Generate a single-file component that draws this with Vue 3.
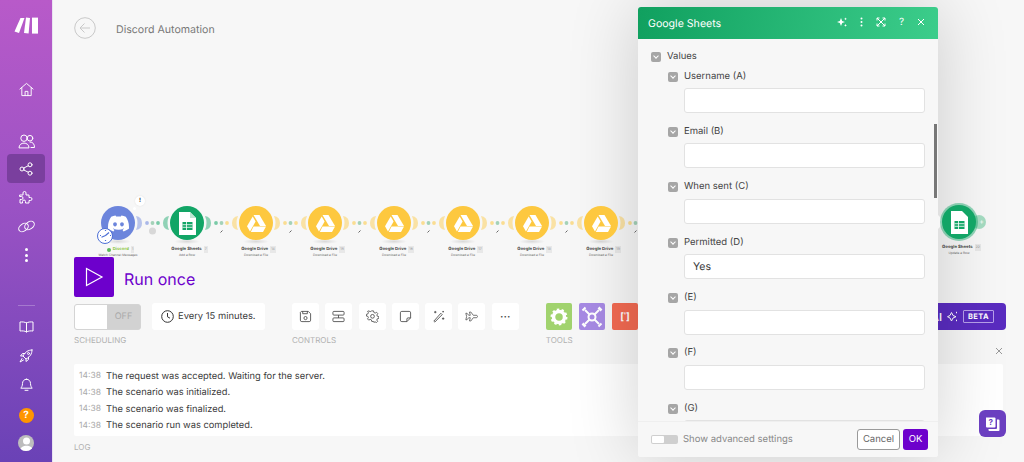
<script setup>
const discordPath = 'M20.317 4.3698a19.7913 19.7913 0 00-4.8851-1.5152.0741.0741 0 00-.0785.0371c-.211.3753-.4447.8648-.6083 1.2495-1.8447-.2762-3.68-.2762-5.4868 0-.1636-.3933-.4058-.8742-.6177-1.2495a.077.077 0 00-.0785-.037 19.7363 19.7363 0 00-4.8852 1.515.0699.0699 0 00-.0321.0277C.5334 9.0458-.319 13.5799.0992 18.0578a.0824.0824 0 00.0312.0561c2.0528 1.5076 4.0413 2.4228 5.9929 3.0294a.0777.0777 0 00.0842-.0276c.4616-.6304.8731-1.2952 1.226-1.9942a.076.076 0 00-.0416-.1057c-.6528-.2476-1.2743-.5495-1.8722-.8923a.077.077 0 01-.0076-.1277c.1258-.0943.2517-.1923.3718-.2914a.0743.0743 0 01.0776-.0105c3.9278 1.7933 8.18 1.7933 12.0614 0a.0739.0739 0 01.0785.0095c.1202.099.246.1981.3728.2924a.077.077 0 01-.0066.1276 12.2986 12.2986 0 01-1.873.8914.0766.0766 0 00-.0407.1067c.3604.698.7719 1.3628 1.225 1.9932a.076.076 0 00.0842.0286c1.961-.6067 3.9495-1.5219 6.0023-3.0294a.077.077 0 00.0313-.0552c.5004-5.177-.8382-9.6739-3.5485-13.6604a.061.061 0 00-.0312-.0286zM8.02 15.3312c-1.1825 0-2.1569-1.0857-2.1569-2.419 0-1.3332.9555-2.4189 2.157-2.4189 1.2108 0 2.1757 1.0952 2.1568 2.419 0 1.3332-.9555 2.4189-2.1569 2.4189zm7.9748 0c-1.1825 0-2.1569-1.0857-2.1569-2.419 0-1.3332.9554-2.4189 2.1569-2.4189 1.2108 0 2.1757 1.0952 2.1568 2.419 0 1.3332-.946 2.4189-2.1568 2.4189Z'

const blue = '#6c85dc'
const green = '#12a566'
const yellow = '#fdc83f'

const drive = { type: 'drive', color: yellow, title: 'Google Drive', sub: 'Download a File' }
const nodes = [
  { type: 'discord', color: blue, next: green, title: 'Discord', sub: 'Watch Channel Messages', badge: '1' },
  { type: 'sheets', color: green, next: yellow, title: 'Google Sheets', sub: 'Add a Row', badge: '7' },
  { ...drive, next: yellow, badge: '14' },
  { ...drive, next: yellow, badge: '15' },
  { ...drive, next: yellow, badge: '16' },
  { ...drive, next: yellow, badge: '17' },
  { ...drive, next: yellow, badge: '18' },
  { ...drive, next: yellow, badge: '19' }
]

const fields = [
  { label: 'Username (A)', value: '' },
  { label: 'Email (B)', value: '' },
  { label: 'When sent (C)', value: '' },
  { label: 'Permitted (D)', value: 'Yes' },
  { label: '(E)', value: '' },
  { label: '(F)', value: '' },
  { label: '(G)', value: '' }
]

const logs = [
  'The request was accepted. Waiting for the server.',
  'The scenario was initialized.',
  'The scenario was finalized.',
  'The scenario run was completed.'
]
</script>

<template>
  <div class="page">
    <aside class="sidebar">
      <svg class="logo" width="24" height="17" viewBox="0 0 24 17" fill="#fff">
        <path d="M6.5 1 10.5 1 5 16 .5 14.6Z" />
        <path d="M12 .6 16 1 14.6 16.4 10 16Z" />
        <path d="M18 .6H24V16.6H18Z" />
      </svg>
      <svg class="side-icon home" width="15" height="15" viewBox="0 0 16 16">
        <path d="M1 7.5 8 1.5l7 6M3 6v8.500h10V6M6.500 14.500V10h3v4.500" />
      </svg>
      <svg class="side-icon people" width="17" height="15" viewBox="0 0 17 15">
        <circle cx="6" cy="4.200" r="3.200" /><circle cx="12" cy="4.200" r="2.800" />
        <path d="M1 13.500c0-6 10-6 10 0ZM12 8c3 0 4.500 2 4.500 5.500H13" />
      </svg>
      <div class="side-active">
        <svg class="side-icon" width="14" height="14" viewBox="0 0 14 14">
          <circle cx="3" cy="7" r="2" /><circle cx="11" cy="2.800" r="2" /><circle cx="11" cy="11.200" r="2" />
          <path d="M4.800 6 9.200 3.800M4.800 8 9.200 10.200" />
        </svg>
      </div>
      <svg class="side-icon puzzle" width="14" height="14" viewBox="0 0 14 14">
        <path d="M1 5h3V3a1.500 1.500 0 0 1 3 0v2h3v2.500h1.500a1.500 1.500 0 0 1 0 3H10V13H6.500v-1.500a1.500 1.500 0 0 0-3 0V13H1V9.500h1.500a1.500 1.500 0 0 0 0-3H1Z" />
      </svg>
      <svg class="side-icon side-link" width="17" height="13" viewBox="0 0 17 13">
        <ellipse cx="5.500" cy="7.500" rx="5.200" ry="3.600" transform="rotate(-35 5.500 7.500)" />
        <ellipse cx="11.500" cy="5.500" rx="5.200" ry="3.600" transform="rotate(-35 11.500 5.500)" />
      </svg>
      <div class="side-dots"><i></i><i></i><i></i></div>
      <div class="side-rule"></div>
      <svg class="side-icon book" width="15" height="12" viewBox="0 0 15 12">
        <path d="M7.500 2C6 .800 3 .800 1 1v9c2-.2 5-.2 6.500 1 1.500-1.200 4.500-1.200 6.500-1V1C12 .800 9 .800 7.500 2ZM7.500 2v9" />
      </svg>
      <svg class="side-icon rocket" width="14" height="14" viewBox="0 0 14 14">
        <path d="M13 1C9 1 6 3 4 7l3 3c4-2 6-5 6-9ZM4 7H1.500L3.500 4.500H6M7 10v2.500L9.500 10.500V8M3 9.500 1 13l3.500-2" />
        <circle cx="9.500" cy="4.500" r="1" />
      </svg>
      <svg class="side-icon bell" width="13" height="14" viewBox="0 0 13 14">
        <path d="M6.500 1.200c-2.500 0-4 2-4 4.300 0 2.500-1 3.700-1.700 4.700h11.400c-.7-1-1.700-2.200-1.700-4.700 0-2.300-1.500-4.300-4-4.300ZM5 12.300h3" />
      </svg>
      <div class="side-help">?</div>
      <div class="side-avatar">
        <svg width="15" height="15" viewBox="0 0 15 15" fill="#fff"><circle cx="7.500" cy="5" r="3.500" /><path d="M1 15c0-7 13-7 13 0Z" /></svg>
      </div>
    </aside>

    <main class="main">
      <header class="top">
        <svg width="22" height="22" viewBox="0 0 22 22" fill="none" stroke="#c9c9c9" stroke-width="1">
          <circle cx="11" cy="11" r="10.300" />
          <path d="M16 11H6M10.500 6.500 6 11l4.500 4.500" />
        </svg>
        <span class="top-title">Discord Automation</span>
      </header>

      <section class="canvas">
        <div class="chain">
          <template v-for="(node, i) in nodes" :key="i">
            <div class="node">
              <div class="node-disc" :style="{ background: node.color }">
                <svg v-if="node.type === 'discord'" width="21" height="21" viewBox="0 0 24 24" fill="#fff"><path :d="discordPath" /></svg>
                <svg v-else-if="node.type === 'sheets'" width="17" height="23" viewBox="0 0 17 23">
                  <path d="M0 0H11L17 6V23H0Z" fill="#fff" />
                  <path d="M11 0 17 6H11Z" fill="#bfe5d3" />
                  <path d="M3.500 10H13.500V18H3.500Z" fill="#12a566" />
                  <path d="M3.500 12.700H13.500M3.500 15.300H13.500M7.500 10V18" stroke="#fff" stroke-width=".8" />
                </svg>
                <svg v-else width="19" height="17" viewBox="0 0 19 17" fill="#fff">
                  <path d="M6.500 0H12.500L19 11H13Z" /><path d="M5.700 1.500 8.600 6.600 3 16.500 0 11.200Z" /><path d="M6.500 11.500H19L16 17H3.800Z" />
                </svg>
                <div v-if="node.type === 'discord'" class="clock">
                  <svg width="13" height="13" viewBox="0 0 13 13" fill="none" stroke="#4d6fd6" stroke-width="1.200"><path d="M6.500 6.500 10 3.500M6.500 6.500 2.500 8.200M6.500 1v1M6.500 11v1M1 6.500h1M11 6.500h1" /></svg>
                </div>
              </div>
              <div class="node-shadow"></div>
              <div class="node-title">
                <i v-if="node.type === 'discord'" class="status"></i>
                <span :class="{ 'title-green': node.type === 'discord' }">{{ node.title }}</span>
                <em>{{ node.badge }}</em>
              </div>
              <div class="node-sub">{{ node.sub }}</div>
              <div v-if="node.type === 'discord'" class="bubble">!</div>
              <div v-if="node.type === 'discord'" class="bubble-dot"></div>
            </div>
            <svg class="link" width="35" height="34" viewBox="0 0 35 34">
              <path d="M1 10Q4 17 1 24Q7 23 7 17Q7 11 1 10Z" :fill="node.color" opacity=".45" />
              <path d="M34 10Q31 17 34 24Q28 23 28 17Q28 11 34 10Z" :fill="node.next" opacity=".45" />
              <circle cx="12" cy="17" r="1.900" :fill="node.color" opacity=".55" />
              <circle cx="17.500" cy="17" r="1.900" fill="#8fc8a8" opacity=".8" />
              <circle cx="23" cy="17" r="1.900" :fill="node.next" opacity=".55" />
              <circle v-if="node.type === 'discord'" cx="17.500" cy="25" r="3.500" fill="#d8d8d8" />
              <path v-else d="M16.500 26.500 18.500 24.500" stroke="#666" stroke-width="1" />
            </svg>
          </template>
        </div>

        <div class="last-node">
          <div class="last-tail">+</div>
          <div class="node-disc last-disc">
            <svg width="17" height="23" viewBox="0 0 17 23">
              <path d="M0 0H11L17 6V23H0Z" fill="#fff" />
              <path d="M3.500 10H13.500V18H3.500Z" fill="#12a566" />
              <path d="M3.500 12.700H13.500M3.500 15.300H13.500M7.500 10V18" stroke="#fff" stroke-width=".8" />
            </svg>
          </div>
          <div class="node-title"><span>Google Sheets</span><em>22</em></div>
          <div class="node-sub">Update a Row</div>
        </div>
      </section>

      <div class="run">
        <button class="run-btn">
          <svg width="20" height="20" viewBox="0 0 20 20" fill="none" stroke="#fff" stroke-width="1.200"><path d="M2.500 1.500 18 10 2.500 18.500Z" /></svg>
        </button>
        <span class="run-text">Run once</span>
      </div>

      <div class="toolbar">
        <div class="group">
          <div class="tools">
            <div class="toggle"><div class="knob"></div><span>OFF</span></div>
            <div class="schedule">
              <svg width="13" height="13" viewBox="0 0 13 13" fill="none" stroke="#333" stroke-width="1"><circle cx="6.500" cy="6.500" r="5.800" /><path d="M6.500 3V6.800L9 8.200" /></svg>
              Every 15 minutes.
            </div>
          </div>
          <div class="group-label">SCHEDULING</div>
        </div>

        <div class="group">
          <div class="tools controls">
            <button class="tool"><svg class="tool-icon" viewBox="0 0 14 14"><path d="M2.500 1.500h7.500l2.500 2.500v7a1.500 1.500 0 0 1-1.500 1.500H3A1.500 1.500 0 0 1 1.500 11V2.500ZM4 1.500V4h5V1.500" /><circle cx="7" cy="8.700" r="1.700" /></svg></button>
            <button class="tool"><svg class="tool-icon" viewBox="0 0 14 14"><rect x="1" y="1.500" width="12" height="4" rx="1" /><rect x="1" y="8.500" width="12" height="4" rx="1" /><path d="M7 5.500v3" /></svg></button>
            <button class="tool"><svg class="tool-icon" viewBox="0 0 14 14"><path d="M6 1h2l.4 1.800 1.500.7 1.600-.9 1.300 1.500-1 1.500.4 1.400 1.800.5v2l-1.800.5-.5 1.400 1 1.500-1.400 1.400-1.500-.9-1.400.6L8 13H6l-.4-1.800-1.500-.6-1.500.9-1.400-1.400 1-1.500-.6-1.400L0 6.900v-2l1.700-.5.5-1.400-.9-1.500L2.700 1l1.500.9 1.400-.7Z" transform="translate(.5 0) scale(.95)" /><circle cx="7" cy="6.800" r="2" /></svg></button>
            <button class="tool"><svg class="tool-icon" viewBox="0 0 14 14"><path d="M3 1.500h8A1.500 1.500 0 0 1 12.500 3v5.500l-4 4H3A1.500 1.500 0 0 1 1.500 11V3A1.500 1.500 0 0 1 3 1.500ZM8.500 12.500V9.800a1.300 1.300 0 0 1 1.300-1.300h2.700" /></svg></button>
            <button class="tool"><svg class="tool-icon" viewBox="0 0 14 14"><path d="M9.500 3.500 2 12l1 1 8-8ZM3.500 1v2.500M2.200 2.300h2.600M12 8v2.500M10.700 9.300h2.600M12 1v1.500M11.200 1.800h1.600" /></svg></button>
            <button class="tool"><svg class="tool-icon" viewBox="0 0 16 14"><path d="M1 3h1.500l2 2.500h2L5.500 1.500h1.700l3 4h3.300c1.500 0 2 .9 2 1.500s-.5 1.500-2 1.500h-3.300l-3 4H5.500l1-4h-2l-2 2.500H1L2 7Z" /></svg></button>
            <button class="tool dots">···</button>
          </div>
          <div class="group-label">CONTROLS</div>
        </div>

        <div class="group">
          <div class="tools colored">
            <button class="tool-color green">
              <svg width="18" height="18" viewBox="0 0 18 18"><circle cx="9" cy="9" r="5.500" fill="none" stroke="#fff" stroke-width="3.500" /><circle cx="9" cy="9" r="7.500" fill="none" stroke="#fff" stroke-width="2" stroke-dasharray="2.400 2.310" /></svg>
            </button>
            <button class="tool-color violet">
              <svg width="24" height="24" viewBox="0 0 24 24" fill="none" stroke="#fff" stroke-width="2"><path d="M5 19 19 5M5 5 19 19M2.500 5.500 5.500 2.500M18.500 21.500 21.500 18.500" /><path d="M21.500 5.500 18.500 2.500M5.500 21.500 2.500 18.500" stroke-width="2.600" /><circle cx="12" cy="12" r="3.500" fill="#a78ae4" /></svg>
            </button>
            <button class="tool-color red">[ˈ]</button>
          </div>
          <div class="group-label">TOOLS</div>
        </div>

        <div class="ai">
          <span class="ai-text">Make AI</span>
          <svg width="11" height="11" viewBox="0 0 11 11" fill="none" stroke="#fff" stroke-width="1"><path d="M4.500 1.500 6 4.500l3 1.200-3 1.300-1.500 3L3 7 .500 5.700 3 4.500ZM9.500 .8v1.500M9.500 8.700v1.500" /></svg>
          <span class="beta">BETA</span>
        </div>
      </div>

      <div class="close-row">
        <svg width="8" height="8" viewBox="0 0 8 8" stroke="#999" stroke-width="1"><path d="M1 1 7 7M7 1 1 7" /></svg>
      </div>

      <section class="log">
        <div v-for="line in logs" :key="line" class="log-row">
          <span class="log-time">14:38</span>
          <span>{{ line }}</span>
        </div>
      </section>
      <div class="group-label log-label">LOG</div>
    </main>

    <div class="modal">
      <div class="modal-arrow"></div>
      <div class="modal-head">
        <span class="modal-title">Google Sheets</span>
        <div class="modal-actions">
          <svg width="10" height="10" viewBox="0 0 10 10" fill="#fff"><path d="M4 1 5.200 4 8 5 5.200 6 4 9 2.800 6 0 5 2.800 4ZM8.500 .5 9 1.500l1 .4-1 .4-.5 1-.5-1-1-.4 1-.4ZM8.500 7l.5 1 1 .4-1 .4-.5 1-.5-1-1-.4 1-.4Z" /></svg>
          <svg width="3" height="10" viewBox="0 0 3 10" fill="#fff"><circle cx="1.500" cy="1.500" r="1" /><circle cx="1.500" cy="5" r="1" /><circle cx="1.500" cy="8.500" r="1" /></svg>
          <svg width="10" height="10" viewBox="0 0 10 10" fill="none" stroke="#fff" stroke-width="1"><path d="M1 3.500V1h2.500M6.500 1H9v2.500M9 6.500V9H6.500M3.500 9H1V6.500M1 1 9 9M9 1 1 9" /></svg>
          <span class="q">?</span>
          <svg width="8" height="8" viewBox="0 0 8 8" stroke="#fff" stroke-width="1"><path d="M1 1 7 7M7 1 1 7" /></svg>
        </div>
      </div>
      <div class="modal-body">
        <div class="scroll-thumb"></div>
        <div class="row-label root">
          <span class="check"></span>Values
        </div>
        <div class="fields">
          <div v-for="f in fields" :key="f.label" class="field">
            <div class="row-label"><span class="check"></span>{{ f.label }}</div>
            <div class="input">{{ f.value }}</div>
          </div>
        </div>
      </div>
      <div class="modal-foot">
        <div class="mini-toggle"><i></i></div>
        <span class="adv">Show advanced settings</span>
        <button class="btn-cancel">Cancel</button>
        <button class="btn-ok">OK</button>
      </div>
    </div>

    <button class="chat">
      <svg width="16" height="16" viewBox="0 0 16 16" fill="#fff">
        <path d="M1 1.500h8.500a1 1 0 0 1 1 1v8a1 1 0 0 1-1 1H2a1 1 0 0 1-1-1Z" />
        <path d="M12 3.500h1.500a1 1 0 0 1 1 1v9.500a1 1 0 0 1-1 1H4.500a1 1 0 0 1-1-1v-1H11a1 1 0 0 0 1-1Z" />
        <text x="5.700" y="9.400" font-size="8" font-weight="700" text-anchor="middle" fill="#6b3fc0" font-family="Inter, sans-serif">?</text>
      </svg>
    </button>
  </div>
</template>

<style>
html, body { margin: 0; overflow: hidden; }
</style>

<style scoped>
.page {
  position: relative;
  display: flex;
  width: 1024px;
  height: 462px;
  overflow: hidden;
  background: #f7f7f7;
  font-family: Inter, "Liberation Sans", sans-serif;
  color: #3a3a3a;
  text-rendering: geometricPrecision;
}

button {
  border: none;
  padding: 0;
  font-family: inherit;
  text-rendering: geometricPrecision;
}

.sidebar {
  flex: 0 0 52px;
  display: flex;
  flex-direction: column;
  align-items: center;
  background: linear-gradient(180deg, #b85ac9 0%, #9a52c4 45%, #6a42b6 100%);
  border-right: 1px solid #e9e3f1;
}

.logo { margin-top: 17px; }

.side-icon {
  fill: none;
  stroke: #fff;
  stroke-width: 1;
  stroke-linejoin: round;
  stroke-linecap: round;
}

.home { margin-top: 48px; }
.people { margin-top: 37px; }

.side-active {
  display: flex;
  align-items: center;
  justify-content: center;
  flex: none;
  width: 38px;
  height: 29px;
  margin-top: 5px;
  border-radius: 4px;
  background: #7a3f9e;
}

.puzzle { margin-top: 7px; }
.side-link { margin-top: 16px; }

.side-dots {
  display: flex;
  flex-direction: column;
  gap: 2.500px;
  margin-top: 15px;
}

.side-dots i {
  width: 3px;
  height: 3px;
  border-radius: 50%;
  background: #fff;
}

.side-rule {
  width: 17px;
  height: 1px;
  margin-top: 43px;
  background: rgba(255, 255, 255, .25);
}

.book { margin-top: 15px; }
.rocket { margin-top: 16px; }
.bell { margin-top: 15px; }

.side-help {
  width: 15px;
  height: 15px;
  margin-top: 16px;
  border-radius: 50%;
  background: #ff9500;
  color: #fff;
  font-size: 10px;
  font-weight: 700;
  line-height: 15px;
  text-align: center;
}

.side-avatar {
  display: flex;
  align-items: flex-end;
  justify-content: center;
  width: 16px;
  height: 16px;
  margin-top: 12px;
  border-radius: 50%;
  background: #bdbdbd;
  overflow: hidden;
}

.main {
  flex: 1;
  min-width: 0;
  display: flex;
  flex-direction: column;
  padding: 0 18px 0 21px;
}

.top {
  display: flex;
  align-items: center;
  gap: 20px;
  height: 56px;
  flex: none;
}

.top-title {
  margin-top: 2px;
  font-size: 10.600px;
  color: #777;
}

.canvas {
  position: relative;
  flex: none;
  height: 201px;
}

.chain {
  display: flex;
  margin: 150px 0 0 27px;
}

.node {
  position: relative;
  display: flex;
  flex-direction: column;
  align-items: center;
  flex: 0 0 34px;
  width: 34px;
}

.link { flex: none; }

.node-disc {
  position: relative;
  z-index: 1;
  display: flex;
  align-items: center;
  justify-content: center;
  flex: none;
  width: 34px;
  height: 34px;
  border-radius: 50%;
}

.node-shadow {
  width: 26px;
  height: 5px;
  margin-top: -1px;
  border-radius: 50%;
  background: radial-gradient(closest-side, rgba(0, 0, 0, .12), rgba(0, 0, 0, 0));
}

.clock {
  position: absolute;
  left: -4px;
  bottom: -3.500px;
  display: flex;
  align-items: center;
  justify-content: center;
  width: 14px;
  height: 14px;
  border: 1.500px solid #4d6fd6;
  border-radius: 50%;
  background: #fff;
}

.node-title {
  display: flex;
  align-items: center;
  gap: 2px;
  margin-top: 2px;
  margin-left: 5px;
  font-size: 4.300px;
  font-weight: 700;
  line-height: 7px;
  color: #444;
  white-space: nowrap;
}

.node-title em {
  padding: 0 1px;
  font-size: 3.500px;
  font-style: normal;
  font-weight: 400;
  color: #999;
  background: #e8e8e8;
}

.title-green { color: #8cc63f; }

.status {
  width: 4px;
  height: 4px;
  border-radius: 50%;
  background: #5cb85c;
}

.node-sub {
  font-size: 3.200px;
  line-height: 5px;
  color: #666;
  white-space: nowrap;
}

.bubble {
  position: absolute;
  top: -10px;
  right: -10px;
  width: 10px;
  height: 10px;
  border-radius: 50%;
  background: #fff;
  font-size: 6px;
  font-weight: 700;
  line-height: 10px;
  text-align: center;
  box-shadow: 0 0 2px rgba(0, 0, 0, .1);
}

.bubble-dot {
  position: absolute;
  top: .500px;
  right: -1px;
  width: 3px;
  height: 3px;
  border-radius: 50%;
  background: #fff;
}

.last-node {
  position: absolute;
  left: 866px;
  top: 149px;
  display: flex;
  flex-direction: column;
  align-items: center;
  width: 38px;
}

.last-disc {
  width: 34px;
  height: 34px;
  background: #12a566;
  box-shadow: 0 0 0 2px rgba(18, 165, 102, .45);
}

.last-tail {
  position: absolute;
  top: 10px;
  left: 32px;
  width: 14px;
  height: 14px;
  border-radius: 50%;
  background: #a5dcc2;
  color: #fff;
  font-size: 7px;
  line-height: 14px;
  text-align: right;
  padding-right: 2px;
  box-sizing: border-box;
}

.last-node .node-title { margin-top: 5px; }

.run {
  display: flex;
  align-items: center;
  gap: 10px;
  flex: none;
  height: 40px;
}

.run-btn {
  display: flex;
  align-items: center;
  justify-content: center;
  width: 40px;
  height: 40px;
  border-radius: 2px;
  background: #6d00cc;
}

.run-text {
  margin-top: 3px;
  font-size: 16px;
  color: #6d00cc;
}

.toolbar {
  position: relative;
  display: flex;
  gap: 27px;
  flex: none;
  margin-top: 6px;
}

.tools {
  display: flex;
  align-items: center;
  height: 27px;
}

.toggle {
  display: flex;
  box-sizing: border-box;
  width: 67px;
  height: 26px;
  margin-right: 11px;
  border: 1px solid #d4d4d4;
  border-radius: 3px;
  background: #d2d2d2;
}

.knob {
  width: 32px;
  background: #fff;
  border-radius: 2px 0 0 2px;
}

.toggle span {
  flex: 1;
  font-size: 9px;
  line-height: 24px;
  text-align: center;
  color: #aaa;
}

.schedule {
  display: flex;
  align-items: center;
  gap: 4px;
  box-sizing: border-box;
  width: 113px;
  height: 27px;
  padding-left: 9px;
  border-radius: 3px;
  background: #fff;
  font-size: 9.400px;
  color: #3a3a3a;
  white-space: nowrap;
}

.group-label {
  margin-top: 5px;
  font-size: 8px;
  line-height: 11px;
  color: #b0b0b0;
}

.controls { gap: 6.300px; }

.tool {
  display: flex;
  align-items: center;
  justify-content: center;
  width: 27px;
  height: 27px;
  border-radius: 3px;
  background: #fff;
}

.tool-icon {
  width: 13px;
  height: 13px;
  fill: none;
  stroke: #444;
  stroke-width: .9;
  stroke-linejoin: round;
}

.dots {
  font-size: 12px;
  color: #444;
}

.colored { gap: 6.500px; }

.tool-color {
  display: flex;
  align-items: center;
  justify-content: center;
  width: 26.500px;
  height: 27px;
  border-radius: 2px;
  color: #fff;
  font-size: 10px;
  font-weight: 700;
}

.tool-color.green { background: #a1d36e; }
.tool-color.violet { background: #a78ae4; }
.tool-color.red { background: #f36a52; }

.ai {
  display: flex;
  align-items: center;
  justify-content: flex-end;
  gap: 5px;
  margin-left: auto;
  box-sizing: border-box;
  width: 120px;
  height: 27px;
  padding-right: 12px;
  border-radius: 4px;
  background: #5a2cc0;
  color: #fff;
  font-size: 11px;
  font-weight: 600;
  white-space: nowrap;
}

.beta {
  padding: 1px 4px;
  border: 1px solid #b7a0ea;
  border-radius: 1px;
  font-size: 7.500px;
  font-weight: 700;
  letter-spacing: .4px;
}

.close-row {
  display: flex;
  justify-content: flex-end;
  margin: 1px 3px 0 0;
  height: 11px;
  line-height: 0;
}

.log {
  flex: none;
  box-sizing: border-box;
  height: 72px;
  margin: 6px 3px 0 0;
  padding: 4px 5px;
  border-radius: 2px;
  background: #fff;
}

.log-row {
  display: flex;
  align-items: center;
  height: 16.500px;
  font-size: 9.300px;
  color: #3a3a3a;
  white-space: nowrap;
}

.log-time {
  flex: 0 0 27px;
  font-size: 8.500px;
  color: #aaa;
}

.log-label { margin-top: 6px; }

.modal {
  position: absolute;
  left: 638px;
  top: 7px;
  display: flex;
  flex-direction: column;
  width: 300px;
  height: 450px;
  border-radius: 3px;
  background: #f7f7f7;
  box-shadow: 0 0 70px rgba(0, 0, 0, .18);
}

.modal-arrow {
  position: absolute;
  top: 210px;
  right: -5px;
  width: 10px;
  height: 10px;
  background: #f7f7f7;
  transform: rotate(45deg);
}

.modal-head {
  display: flex;
  align-items: center;
  justify-content: space-between;
  flex: none;
  height: 32px;
  padding: 0 13px 0 10px;
  border-radius: 3px 3px 0 0;
  background: linear-gradient(100deg, #10a05f 0%, #3ccd8b 100%);
  color: #fff;
}

.modal-title { font-size: 10.600px; }

.modal-actions {
  display: flex;
  align-items: center;
  gap: 13px;
  margin-bottom: 2px;
}

.q { font-size: 10px; line-height: 10px; }

.modal-body {
  position: relative;
  flex: 1;
  min-height: 0;
  box-sizing: border-box;
  padding: 10px 0 0 13px;
  overflow: hidden;
}

.scroll-thumb {
  position: absolute;
  top: 85px;
  right: 1px;
  width: 3px;
  height: 74px;
  background: #777;
}

.row-label {
  display: flex;
  align-items: center;
  gap: 6px;
  height: 14px;
  font-size: 9.500px;
  color: #444;
}

.root { margin-bottom: 6px; }

.fields { padding-left: 17px; }

.field { margin-bottom: 11.400px; }

.check {
  position: relative;
  display: block;
  width: 10px;
  height: 10px;
  margin-top: 1px;
  border-radius: 2px;
  background: #a6a6a6;
}

.check::after {
  content: "";
  position: absolute;
  left: 3px;
  top: 2px;
  width: 3px;
  height: 3px;
  border-right: 1px solid #fff;
  border-bottom: 1px solid #fff;
  transform: rotate(45deg);
}

.input {
  box-sizing: border-box;
  width: 241px;
  height: 25px;
  margin: 5px 0 0 16px;
  padding-left: 8px;
  border: 1px solid #e2e2e2;
  border-radius: 3px;
  background: #fff;
  font-size: 10.500px;
  line-height: 23px;
  color: #3a3a3a;
}

.modal-foot {
  display: flex;
  align-items: center;
  flex: none;
  box-sizing: border-box;
  height: 36px;
  padding: 0 10px 0 13px;
  border-top: 1px solid #efefef;
  background: #f7f7f7;
  border-radius: 0 0 3px 3px;
}

.mini-toggle {
  width: 27px;
  height: 9px;
  border-radius: 2px;
  background: #cfcfcf;
}

.mini-toggle i {
  display: block;
  width: 12px;
  height: 7px;
  margin: 1px;
  border-radius: 1px;
  background: #fff;
}

.adv {
  flex: 1;
  margin-left: 5px;
  font-size: 9.500px;
  color: #888;
}

.btn-cancel {
  box-sizing: border-box;
  width: 43px;
  height: 21px;
  margin-right: 3px;
  border: 1px solid #9a9a9a;
  border-radius: 3px;
  background: #fff;
  font-size: 9.500px;
  color: #666;
}

.btn-ok {
  width: 25px;
  height: 21px;
  border-radius: 3px;
  background: #6d00cc;
  color: #fff;
  font-size: 9.500px;
}

.chat {
  position: absolute;
  left: 979px;
  top: 410px;
  display: flex;
  align-items: center;
  justify-content: center;
  width: 27px;
  height: 27px;
  border-radius: 6px;
  background: #6b3fc0;
}
</style>
